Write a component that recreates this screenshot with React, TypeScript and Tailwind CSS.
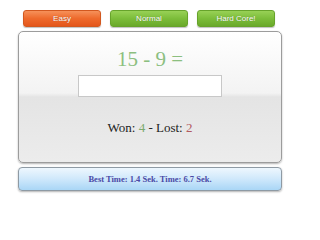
const serif = { fontFamily: '"Liberation Serif", "Times New Roman", serif' };

function LevelButton({ label, active }: { label: string; active?: boolean }) {
  const color = active
    ? "bg-[linear-gradient(#f6915a,#ee6a2c_50%,#e4561b)] border-[#d2581f]"
    : "bg-[linear-gradient(#98d156,#7cbd3a_50%,#6aa92a)] border-[#67a32b]";
  return (
    <button
      className={`w-[78px] h-[17px] rounded-[3px] border text-white text-[8px] leading-none flex items-center justify-center shadow-[0_1px_1px_rgba(0,0,0,0.25)] [text-shadow:0_0_1px_rgba(0,0,0,0.35)] font-['Liberation_Sans',Arial,sans-serif] ${color}`}
    >
      {label}
    </button>
  );
}

export default function App() {
  return (
    <div className="w-[300px] h-[200px] bg-white flex flex-col pt-[10px] overflow-hidden">
      <div className="flex gap-[9px] pl-[23px]">
        <LevelButton label="Easy" active />
        <LevelButton label="Normal" />
        <LevelButton label="Hard Core!" />
      </div>

      <div className="ml-[18px] mt-[4px] w-[264px] h-[132px] rounded-[5px] border border-[#9c9c9c] shadow-[0_1px_2px_rgba(0,0,0,0.3)] bg-[linear-gradient(#ffffff,#f3f3f3_47%,#e4e4e4_50%,#ececec)] flex flex-col items-center pt-[15px]">
        <div className="text-[21px] leading-[24px] text-[#8cbf80]" style={serif}>
          15 - 9 =
        </div>
        <input
          type="text"
          className="mt-[4px] w-[144px] h-[22px] bg-white border border-[#c8c8c8] outline-none"
        />
        <div className="mt-[23px] text-[13px] leading-[16px] text-[#222]" style={serif}>
          Won: <span className="text-[#7caa6e]">4</span> - Lost:{" "}
          <span className="text-[#b35a60]">2</span>
        </div>
      </div>

      <div className="ml-[18px] mt-[4px] w-[264px] h-[24px] rounded-[4px] border border-[#8e9aa4] shadow-[0_1px_2px_rgba(0,0,0,0.3)] bg-[linear-gradient(#eef7fe,#cfe8fb_50%,#a9d6f6)] flex items-center justify-center">
        <span className="text-[8.5px] font-bold text-[#4a4aa6]" style={serif}>
          Best Time: 1.4 Sek. Time: 6.7 Sek.
        </span>
      </div>
    </div>
  );
}
